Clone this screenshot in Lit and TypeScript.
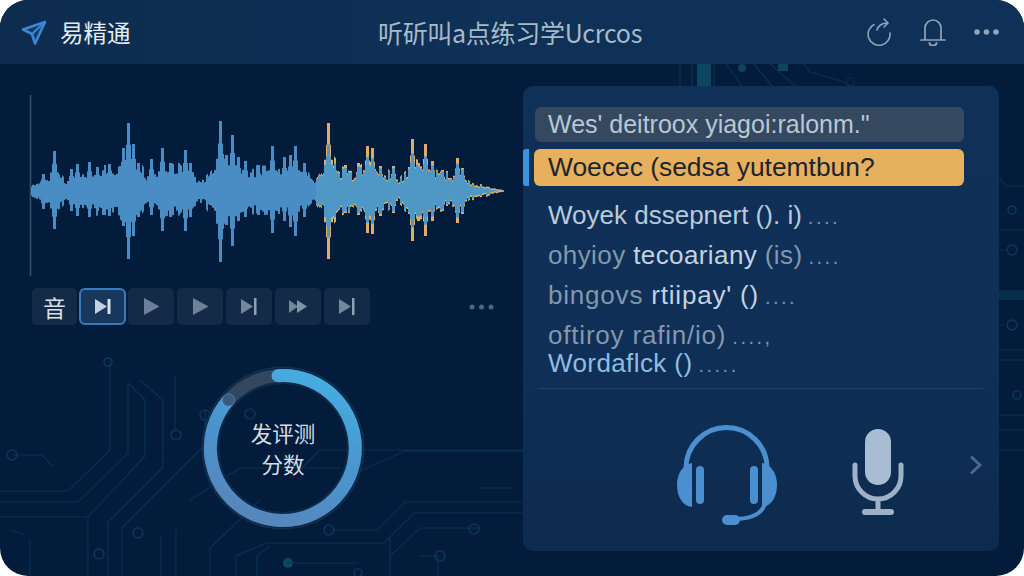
import { LitElement, html, css, svg } from "lit";
import { customElement } from "lit/decorators.js";

const CX = 191;
const ENV: [number, number][] = [[31,5],[36,7],[44,11],[54,15],[62,11],[67,7],[75,13],[90,17],[108,18],[120,21],[128,26],[140,22],[148,12],[155,17],[165,23],[180,18],[190,13],[203,10],[212,20],[222,27],[240,21],[255,17],[270,18],[290,19],[305,17],[314,8],[322,17],[330,28],[340,18],[352,14],[362,18],[372,23],[385,16],[397,8],[405,15],[415,21],[425,19],[437,14],[450,14],[460,15],[470,7],[480,5],[490,3],[503,1]];
const SPIKES: [number, number, number][] = [[43,17,18],[54,40,38],[71,22,20],[77,27,25],[89,29,26],[97,24,20],[109,27,25],[123,43,35],[128,68,68],[133,47,45],[138,28,26],[151,32,24],[162,43,40],[170,28,26],[185,41,40],[190,28,26],[220,70,71],[226,36,34],[232,56,55],[238,34,30],[245,30,26],[258,26,24],[272,45,42],[284,34,30],[290,36,36],[295,45,45],[304,28,26],[328,68,68],[345,26,22],[358,28,24],[367,45,42],[372,43,43],[380,25,25],[393,25,22],[412,52,50],[418,28,30],[425,47,45],[432,30,30],[442,21,20],[457,33,32],[462,23,23]];

function envAt(x: number): number {
  for (let i = 0; i < ENV.length - 1; i++) {
    const [a, ha] = ENV[i];
    const [b, hb] = ENV[i + 1];
    if (x >= a && x <= b) return ha + ((hb - ha) * (x - a)) / (b - a);
  }
  return 1;
}
function hash(k: number): number {
  const v = Math.sin(k * 12.9898) * 43758.5453;
  return v - Math.floor(v);
}
function heights(): [number, number][] {
  const out: [number, number][] = [];
  for (let x = 31; x <= 503; x++) {
    const k = Math.floor(x / 2);
    const n = hash(k);
    const e = envAt(x);
    const extra = hash(k + 500) > 0.78 ? e * 0.4 : 0;
    const up = e * (0.72 + 0.42 * n) + extra;
    const down = e * (0.72 + 0.42 * hash(k + 900)) + extra * 0.9;
    let u = up, d0 = down;
    for (const [sx, su, sd] of SPIKES) {
      const d = Math.abs(x - sx);
      if (d <= 1) { u = Math.max(u, su); d0 = Math.max(d0, sd); }
      else if (d === 2) { u = Math.max(u, su * 0.68); d0 = Math.max(d0, sd * 0.68); }
      else if (d <= 4) { u = Math.max(u, su * 0.46); d0 = Math.max(d0, sd * 0.46); }
    }
    out.push([u, d0]);
  }
  return out;
}
function wavePath(hs: [number, number][], from: number, to: number): string {
  let top = "", bottom = "";
  hs.forEach(([u, d], i) => {
    const x = 31 + i;
    if (x < from || x > to) return;
    const cmd = top ? "L" : "M";
    top += `${cmd}${x} ${(CX - u).toFixed(1)}L${x + 1} ${(CX - u).toFixed(1)}`;
    bottom = `L${x + 1} ${(CX + d).toFixed(1)}L${x} ${(CX + d).toFixed(1)}` + bottom;
  });
  return top + bottom + "Z";
}

@customElement("circuit-bg")
class CircuitBg extends LitElement {
  static styles = css`
    :host { position: absolute; inset: 0; display: block; }
    svg { display: block; }
    .l { fill: none; stroke: #0a3152; stroke-width: 1.2; }
    .d { fill: none; stroke: #0b3655; stroke-width: 1.6; }
    .f { fill: #0c4560; }
    .b { fill: #0d465f; }
  `;
  render() {
    return html`<svg width="1024" height="576" viewBox="0 0 1024 576">
      ${svg`
      <path class="l" d="M0 491H68L110 450V362M0 502H78L128 453V383L145 400V456L88 517H0M163 467V400L140 380M88 517V576M108 576V522L163 467M122 576V528L205 445V410M175 432V376M176 530V576M161 535V576M190 500L240 468H340M300 470L320 450H560M340 473L355 473L405 451H560M329 530H377L405 502H560M210 576V548L260 500M236 576V556L266 543H384L414 513H560M257 576V556L270 546M390 576V556L420 528H480M390 536V576M12 455H42L52 466M478 488H512M10 530L25 535M30 540V576"/>
      <circle class="d" cx="12" cy="455" r="5"/><circle class="d" cx="176" cy="435" r="5"/><circle class="d" cx="138" cy="533" r="5"/><circle class="d" cx="99" cy="554" r="5"/><circle class="d" cx="205" cy="415" r="5"/><circle class="d" cx="250" cy="414" r="5"/><circle class="d" cx="329" cy="530" r="5"/><circle class="d" cx="474" cy="529" r="5"/><circle class="d" cx="358" cy="573" r="4"/><circle class="d" cx="440" cy="556" r="5"/><circle class="d" cx="108" cy="362" r="4"/><circle class="b" cx="288" cy="563" r="5"/><path class="l" d="M288 563H358M420 556H438V576"/>
      <path class="l" d="M680 64V86M692 64V86M714 64V86M726 64L742 86M754 64L772 86M804 64L810 72L845 82L850 86M770 64L795 86"/>
      <rect class="f" x="697" y="64" width="14" height="22"/><circle class="f" cx="742" cy="68" r="4"/><rect class="f" x="778" y="64" width="10" height="7"/><circle class="l" cx="850" cy="82" r="4"/>
      <path class="l" d="M999 178L1006 186H1024M999 230H1024M999 250H1005M999 325H1005M999 350H1024M999 360H1024M999 415H1024M999 430H1024M999 450H1024"/>
      <circle class="d" cx="1012" cy="210" r="4"/><circle class="d" cx="1012" cy="250" r="5"/><circle class="d" cx="1012" cy="325" r="5"/><circle class="d" cx="1017" cy="395" r="4"/>
      <rect class="f" x="999" y="290" width="25" height="10" opacity="0.45"/>
      `}
    </svg>`;
  }
}

@customElement("wave-form")
class WaveForm extends LitElement {
  static styles = css`
    :host { display: block; width: 100%; height: 100%; }
    svg { display: block; }
    .axis { stroke: #33506e; stroke-width: 1.5; }
    .blue { fill: #4a8cc4; }
    .orange { fill: #dcae68; }
    .mid { fill: #4f98c6; }
  `;
  render() {
    const hs = heights();
    const inner = hs.map(([u, d]) => [Math.min(u - 1.5, u * 0.55 + 9), Math.min(d - 1.5, d * 0.55 + 9)] as [number, number]);
    return html`<svg width="490" height="190" viewBox="21 90 490 190">
      ${svg`
      <line class="axis" x1="30.5" y1="95" x2="30.5" y2="276"/>
      <path class="orange" d=${wavePath(hs, 314, 503)}/>
      <path class="blue" d=${wavePath(hs, 31, 316)}/>
      <path class="mid" d=${wavePath(inner, 316, 503)}/>
      `}
    </svg>`;
  }
}

@customElement("app-root")
class AppRoot extends LitElement {
  static styles = css`
    :host { display: block; width: 1024px; height: 576px; background: #fff; font-family: "Liberation Sans", "Noto Sans CJK SC", sans-serif; }
    .frame { position: relative; width: 1024px; height: 576px; overflow: hidden; border-radius: 28px; background: #041c3b; display: flex; flex-direction: column; }
    .head, .main { position: relative; }
    .head { height: 64px; flex: none; display: grid; grid-template-columns: 1fr auto 1fr; align-items: center; padding: 0 25px 0 21px; background: linear-gradient(90deg, #0d2c4e, #0f3157 50%, #0f3158); }
    .brand { display: flex; align-items: center; gap: 14px; font: 400 23.5px "Noto Sans CJK SC", sans-serif; color: #e4ebf1; }
    .title { font: 400 25px "Noto Sans CJK SC", sans-serif; color: #a7b9cb; letter-spacing: -0.3px; white-space: nowrap; }
    .tools { display: flex; justify-content: flex-end; align-items: center; gap: 28px; }
    svg { display: block; }
    .main { flex: 1; display: flex; padding: 22px 25px 25px 31px; min-height: 0; }
    .left { width: 492px; flex: none; display: flex; flex-direction: column; }
    .wave { height: 190px; margin: 4px 0 0 -10px; flex: none; }
    .controls { display: flex; align-items: center; gap: 2px; margin-top: 8px; padding-left: 1px; }
    .btn { width: 46px; height: 37px; border-radius: 5px; background: #142b48; display: flex; align-items: center; justify-content: center; margin-right: 1px; }
    .btn.ch { width: 45px; color: #d7dfe7; font: 400 23px "Noto Sans CJK SC", sans-serif; margin-right: 0; }
    .btn.on { width: 47px; height: 37px; box-sizing: border-box; background: #17385c; border: 2px solid #3b7cb8; border-radius: 6px; margin-right: 0; }
    .more { margin-left: auto; margin-right: 29px; }
    .score { position: relative; margin: 41px 0 0 170px; width: 164px; height: 164px; }
    .score-text { position: absolute; inset: 0; display: flex; flex-direction: column; align-items: center; justify-content: center; font: 400 21.5px/31px "Noto Sans CJK SC", sans-serif; color: #d5dde5; }
    .panel { flex: 1; border-radius: 10px; background: linear-gradient(180deg, #0f3057, #0f2f56 60%, #0d2b4e); position: relative; display: flex; flex-direction: column; padding: 21px 35px 0 12px; box-sizing: border-box; }
    .row { font-size: 25px; height: 35px; line-height: 35px; padding-left: 13px; white-space: nowrap; color: #b9c7d6; }
    .row.first { width: 429px; box-sizing: border-box; background: #34495f; border-radius: 6px; }
    .row.cur { width: 430px; margin-left: -1px; margin-top: 7px; height: 37px; line-height: 37px; padding-left: 14px; box-sizing: border-box; background: #e7b05d; color: #1b2430; border-radius: 6px; font-size: 26.4px; }
    .tab { position: absolute; left: 0; top: 63px; width: 6px; height: 37px; border-radius: 3px 0 0 3px; background: #3a94e0; }
    .items { margin-top: 9px; display: flex; flex-direction: column; }
    .item { height: 40px; line-height: 40px; padding-left: 13px; font-size: 26px; white-space: nowrap; color: #c3d2e0; }
    .item .d { color: #7f95ad; font-size: 20px; letter-spacing: 2.5px; margin-left: 6px; }
    .item .m { color: #8397ad; }
    .item.w { color: #b9cadb; }
    .item.sp { letter-spacing: 0.4px; }
    .item.wide { letter-spacing: 0.8px; }
    .item.last { color: #8fbde2; margin-top: -12px; }
    .rule { height: 1px; background: #1e4269; margin: 5px -19px 0 3px; flex: none; }
    .voice { position: relative; flex: 1; }
    .hp { position: absolute; left: 141px; top: 35px; }
    .mic { position: absolute; left: 317px; top: 39px; }
    .chev { position: absolute; left: 434px; top: 66px; }
  `;
  render() {
    return html`<div class="frame">
      <circuit-bg></circuit-bg>
      <div class="head">
        <div class="brand">
          <svg width="25" height="25" viewBox="0 0 25 25"><path d="M24 2 2 9.500l9 4.500 3 9.500Z" fill="#143a66" stroke="#3c86d6" stroke-width="2.600" stroke-linejoin="round"/><path d="M24 2 11 14" stroke="#3c86d6" stroke-width="2"/></svg>
          <span>易精通</span>
        </div>
        <div class="title">听斫叫a点练习学Ucrcos</div>
        <div class="tools">
          <svg width="26" height="28" viewBox="0 0 26 28" fill="none" stroke="#8ea3b8" stroke-width="1.600" stroke-linecap="round" stroke-linejoin="round"><path d="M8 6.500A11 11 0 1 0 24 15"/><path d="M11 12C12 8 16 5 21 5M18 1l4 4-4 4"/></svg>
          <svg width="26" height="28" viewBox="0 0 26 28" fill="none" stroke="#8ea3b8" stroke-width="1.700" stroke-linecap="round"><path d="M5 21.500V10a8 8 0 0 1 16 0v11.500M1 22h24"/><path d="M9.500 25a3.500 2.500 0 0 0 7 0" stroke-width="2"/></svg>
          <svg width="25" height="6" viewBox="0 0 25 6" fill="#8fa5ba"><circle cx="3" cy="3" r="2.800"/><circle cx="12.500" cy="3" r="2.800"/><circle cx="22" cy="3" r="2.800"/></svg>
        </div>
      </div>
      <div class="main">
        <div class="left">
          <div class="wave"><wave-form></wave-form></div>
          <div class="controls">
            <div class="btn ch">音</div>
            <div class="btn on"><svg width="18" height="17" viewBox="0 0 18 17"><path d="M1 1 13 8.500 1 16Z" fill="#c3d2e0"/><rect x="13.500" y="1" width="3" height="15" fill="#d5e0ea"/></svg></div>
            <div class="btn"><svg width="17" height="17" viewBox="0 0 17 17"><path d="M1 0 16.500 8.500 1 17Z" fill="#6d8298"/></svg></div>
            <div class="btn"><svg width="17" height="17" viewBox="0 0 17 17"><path d="M1 0 16.500 8.500 1 17Z" fill="#6d8298"/></svg></div>
            <div class="btn"><svg width="18" height="17" viewBox="0 0 18 17"><path d="M1 1 13 8.500 1 16Z" fill="#74889d"/><rect x="14" y="0" width="2.500" height="17" fill="#8ea0b2"/></svg></div>
            <div class="btn"><svg width="20" height="15" viewBox="0 0 20 15"><path d="M1 1 10 7.500 1 14Z" fill="#74889d"/><path d="M9 1 19 7.500 9 14Z" fill="#8195a9"/></svg></div>
            <div class="btn"><svg width="18" height="17" viewBox="0 0 18 17"><path d="M1 1 13 8.500 1 16Z" fill="#74889d"/><rect x="14" y="0" width="2.500" height="17" fill="#8ea0b2"/></svg></div>
            <svg class="more" width="25" height="6" viewBox="0 0 25 6" fill="#4d6680"><circle cx="3" cy="3" r="2.500"/><circle cx="12.500" cy="3" r="2.500"/><circle cx="22" cy="3" r="2.500"/></svg>
          </div>
          <div class="score">
            <svg width="164" height="164" viewBox="0 0 164 164" fill="none">
              <defs><linearGradient id="rg" x1="0.8" y1="0" x2="0.4" y2="1"><stop offset="0" stop-color="#45aee2"/><stop offset="0.5" stop-color="#4a95cf"/><stop offset="1" stop-color="#5587bd"/></linearGradient></defs>
              <circle cx="82" cy="82" r="80.500" stroke="#10304f" stroke-width="2"/>
              <circle cx="82" cy="82" r="65" stroke="#0f2a48" stroke-width="2.500"/>
              <circle cx="82" cy="82" r="72.500" stroke="#33475f" stroke-width="13"/>
              <path d="M77 9.700A72.500 72.500 0 1 1 27.500 34" stroke="url(#rg)" stroke-width="13" stroke-linecap="round"/>
              <circle cx="27.500" cy="34" r="6" fill="#3d5a7e"/>
            </svg>
            <div class="score-text"><span>发评测</span><span>分数</span></div>
          </div>
        </div>
        <div class="panel">
          <div class="tab"></div>
          <div class="row first">Wes' deitroox yiagoi:ralonm."</div>
          <div class="row cur">Woecec (sedsa yutemtbun?</div>
          <div class="items">
            <div class="item w">Woyek dssepnert (). i)<span class="d">....</span></div>
            <div class="item sp"><span class="m">ohyioy</span> tecoariany <span class="m">(is)</span><span class="d">....</span></div>
            <div class="item wide"><span class="m">bingovs</span> rtiipay' ()<span class="d">....</span></div>
            <div class="item wide"><span class="m">oftiroy rafin/io)</span><span class="d">....,</span></div>
            <div class="item last sp">Wordaflck ()<span class="d">.....</span></div>
          </div>
          <div class="rule"></div>
          <div class="voice">
            <svg class="hp" width="102" height="102" viewBox="0 0 102 102" fill="none">
              <path d="M10 56V44a40.500 40.500 0 0 1 81 0v12" stroke="#4a8fd0" stroke-width="5"/>
              <path d="M16 39v44C6 82 1 72 1 61S6 41 16 39Z" fill="#4a8fd0"/>
              <path d="M86 39v44c10-1 15-11 15-22S96 41 86 39Z" fill="#4a8fd0"/>
              <rect x="20" y="42" width="8" height="38" rx="4" fill="#4a8fd0"/>
              <rect x="74" y="42" width="8" height="38" rx="4" fill="#4a8fd0"/>
              <path d="M90 76C88 89 76 95 58 95" stroke="#4a8fd0" stroke-width="4"/>
              <rect x="46" y="91" width="18" height="10" rx="5" fill="#4a8fd0"/>
            </svg>
            <svg class="mic" width="52" height="88" viewBox="0 0 52 88" fill="none">
              <rect x="13" y="1" width="26" height="56" rx="13" fill="#a9bdd2"/>
              <path d="M3 37v11a23 23 0 0 0 46 0V37" stroke="#9db1c7" stroke-width="5" stroke-linecap="round"/>
              <path d="M26 70V83" stroke="#9db1c7" stroke-width="5"/>
              <rect x="10" y="81" width="32" height="6" rx="3" fill="#9db1c7"/>
            </svg>
            <svg class="chev" width="13" height="20" viewBox="0 0 13 20" fill="none"><path d="M2 1.500 11 10 2 18.500" stroke="#4d6a88" stroke-width="2.800"/></svg>
          </div>
        </div>
      </div>
    </div>`;
  }
}
export { AppRoot, WaveForm, CircuitBg };
